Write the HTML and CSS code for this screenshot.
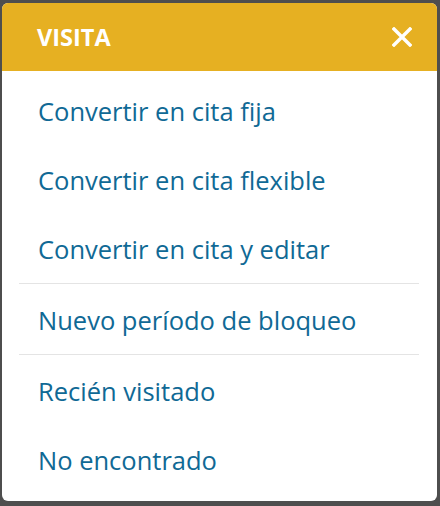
FILE: index.html
```html
<!DOCTYPE html>
<html lang="es">
<head>
    <meta charset="UTF-8">
    <meta name="viewport" content="width=device-width, initial-scale=1.0">
    <title>Visita</title>
    <link rel="stylesheet" href="styles.css">
</head>
<body>
    <div class="menu-card">
        <div class="menu-header">
            <span class="menu-title">VISITA</span>
            <button class="close-btn" aria-label="Cerrar">
                <svg width="20" height="20" viewBox="0 0 20 20">
                    <path d="M2 2 L18 18 M18 2 L2 18" stroke="#fff" stroke-width="3.4" stroke-linecap="square" fill="none"/>
                </svg>
            </button>
        </div>
        <ul class="menu-list">
            <li class="menu-item">Convertir en cita fija</li>
            <li class="menu-item">Convertir en cita flexible</li>
            <li class="menu-item">Convertir en cita y editar</li>
            <li class="menu-sep"></li>
            <li class="menu-item">Nuevo período de bloqueo</li>
            <li class="menu-sep"></li>
            <li class="menu-item">Recién visitado</li>
            <li class="menu-item">No encontrado</li>
        </ul>
    </div>
</body>
</html>
```

FILE: styles.css
```css
/* Page */
body {
    margin: 0;
    padding: 3px 3px 5px 2px;
    background-color: #4e4e4e;
    font-family: 'Open Sans', 'DejaVu Sans', sans-serif;
}

/* Card */
.menu-card {
    height: 498px;
    box-sizing: border-box;
    background: #fff;
    border-radius: 6px;
    overflow: hidden;
}

.menu-header {
    height: 68px;
    display: flex;
    align-items: center;
    justify-content: space-between;
    padding: 0 25px 0 35px;
    background-color: #e6b022;
}

.menu-title {
    color: #fff;
    font-weight: bold;
    font-size: 23.5px;
}

.close-btn {
    display: flex;
    padding: 0;
    border: none;
    background: none;
}

/* Items */
.menu-list {
    list-style: none;
    margin: 0;
    padding: 5px 0 0;
}

.menu-item {
    height: 69px;
    display: flex;
    align-items: center;
    padding-left: 36px;
    color: #106995;
    font-size: 25.5px;
}

.menu-sep {
    height: 1px;
    margin: 0 18px 1px 17px;
    background-color: #e4e4e4;
}
```
